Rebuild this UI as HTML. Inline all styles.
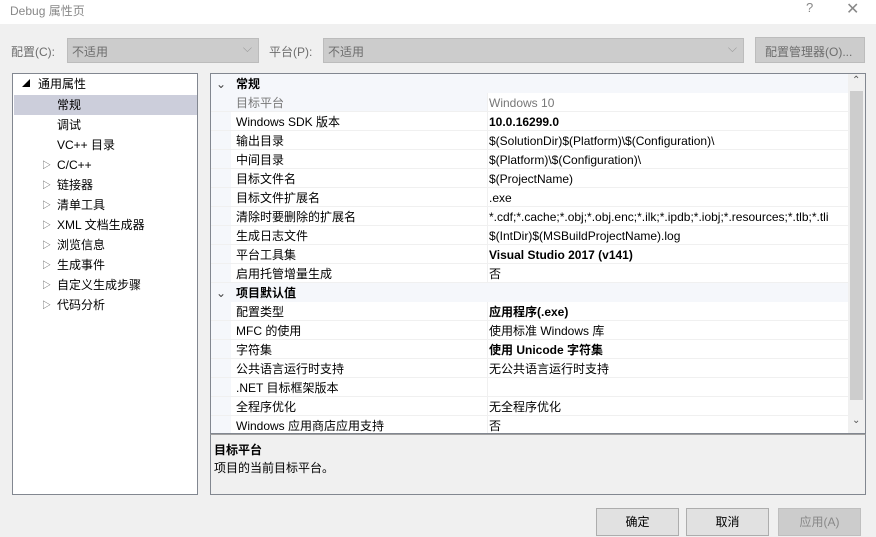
<html><head><style>
*{margin:0;padding:0;box-sizing:border-box}
body{width:876px;height:537px;background:#f0f0f0;font-family:"Liberation Sans","Noto Sans CJK SC",sans-serif;font-size:12px;color:#000;position:relative;overflow:hidden}
.a{position:absolute;white-space:nowrap}
.title{left:0;top:0;width:876px;height:24px;background:#fff}
.combo{height:25px;background:#cccccc;border:1px solid #bcbcbc;color:#6d6d6d;padding:4px 4px;top:38px}
.tree{left:12px;top:73px;width:186px;height:422px;background:#fff;border:1px solid #828790}
.ti{position:absolute;left:0;width:184px;height:20px;line-height:20px}
.grid{left:210px;top:73px;width:656px;height:361px;background:#fff;border:1px solid #828790;overflow:hidden}
.row{position:absolute;left:0;width:637px;height:19px;border-bottom:1px solid #f0f0f0;line-height:20px}
.row .k{position:absolute;left:25px}
.row .v{position:absolute;left:276px;border-left:1px solid #f0f0f0;padding-left:1px;height:19px}
.hdr{position:absolute;left:0;width:637px;height:19px;background:#f5f7fb;line-height:21px;font-weight:bold}
.btn{top:508px;height:28px;width:83px;background:#e1e1e1;border:1px solid #adadad;text-align:center;line-height:26px}
</style></head><body>
<div class="a title"></div>
<div class="a" style="left:10px;top:2px;color:#888;font-size:12px">Debug 属性页</div>
<div class="a" style="left:806px;top:0px;color:#888;font-size:13px">?</div>
<div class="a" style="left:846px;top:-1px;color:#888;font-size:16px">✕</div>
<div class="a" style="left:11px;top:43px;color:#6d6d6d">配置(C):</div>
<div class="a combo" style="left:67px;width:192px">不适用<span style="position:absolute;right:6px;top:2px;color:#999">⌵</span></div>
<div class="a" style="left:269px;top:43px;color:#6d6d6d">平台(P):</div>
<div class="a combo" style="left:323px;width:421px">不适用<span style="position:absolute;right:6px;top:2px;color:#999">⌵</span></div>
<div class="a combo" style="left:755px;width:110px;height:26px;top:37px;background:#cccccc;padding:5px 9px">配置管理器(O)...</div>

<div class="a tree">
<div class="ti" style="top:0"><span style="position:absolute;left:9px;font-size:8px">◢</span><span style="position:absolute;left:25px">通用属性</span></div>
<div class="ti" style="top:21px;left:1px;width:183px;background:#cccedb"><span style="position:absolute;left:43px">常规</span></div>
<div class="ti" style="top:41px"><span style="position:absolute;left:44px">调试</span></div>
<div class="ti" style="top:61px"><span style="position:absolute;left:44px">VC++ 目录</span></div>
<div class="ti" style="top:81px"><span style="position:absolute;left:29px;font-size:9px;color:#555">▷</span><span style="position:absolute;left:44px">C/C++</span></div>
<div class="ti" style="top:101px"><span style="position:absolute;left:29px;font-size:9px;color:#555">▷</span><span style="position:absolute;left:44px">链接器</span></div>
<div class="ti" style="top:121px"><span style="position:absolute;left:29px;font-size:9px;color:#555">▷</span><span style="position:absolute;left:44px">清单工具</span></div>
<div class="ti" style="top:141px"><span style="position:absolute;left:29px;font-size:9px;color:#555">▷</span><span style="position:absolute;left:44px">XML 文档生成器</span></div>
<div class="ti" style="top:161px"><span style="position:absolute;left:29px;font-size:9px;color:#555">▷</span><span style="position:absolute;left:44px">浏览信息</span></div>
<div class="ti" style="top:181px"><span style="position:absolute;left:29px;font-size:9px;color:#555">▷</span><span style="position:absolute;left:44px">生成事件</span></div>
<div class="ti" style="top:201px"><span style="position:absolute;left:29px;font-size:9px;color:#555">▷</span><span style="position:absolute;left:44px">自定义生成步骤</span></div>
<div class="ti" style="top:221px"><span style="position:absolute;left:29px;font-size:9px;color:#555">▷</span><span style="position:absolute;left:44px">代码分析</span></div>
</div>

<div class="a grid">
<div style="position:absolute;left:0;top:0;width:20px;height:360px;background:#f5f7fb"></div>
<div class="hdr" style="top:0"><span style="position:absolute;left:5px;font-weight:normal;color:#444">⌄</span><span style="position:absolute;left:25px">常规</span></div>
<div class="row" style="top:19px;background:linear-gradient(90deg,#f5f7fb 0,#f5f7fb 276px,#fff 276px)"><span class="k" style="color:#777">目标平台</span><span class="v" style="color:#777">Windows 10</span></div>
<div class="row" style="top:38px"><span class="k">Windows SDK 版本</span><span class="v"><b>10.0.16299.0</b></span></div>
<div class="row" style="top:57px"><span class="k">输出目录</span><span class="v">$(SolutionDir)$(Platform)\$(Configuration)\</span></div>
<div class="row" style="top:76px"><span class="k">中间目录</span><span class="v">$(Platform)\$(Configuration)\</span></div>
<div class="row" style="top:95px"><span class="k">目标文件名</span><span class="v">$(ProjectName)</span></div>
<div class="row" style="top:114px"><span class="k">目标文件扩展名</span><span class="v">.exe</span></div>
<div class="row" style="top:133px"><span class="k">清除时要删除的扩展名</span><span class="v">*.cdf;*.cache;*.obj;*.obj.enc;*.ilk;*.ipdb;*.iobj;*.resources;*.tlb;*.tli</span></div>
<div class="row" style="top:152px"><span class="k">生成日志文件</span><span class="v">$(IntDir)$(MSBuildProjectName).log</span></div>
<div class="row" style="top:171px"><span class="k">平台工具集</span><span class="v"><b>Visual Studio 2017 (v141)</b></span></div>
<div class="row" style="top:190px"><span class="k">启用托管增量生成</span><span class="v">否</span></div>
<div class="hdr" style="top:209px"><span style="position:absolute;left:5px;font-weight:normal;color:#444">⌄</span><span style="position:absolute;left:25px">项目默认值</span></div>
<div class="row" style="top:228px"><span class="k">配置类型</span><span class="v"><b>应用程序(.exe)</b></span></div>
<div class="row" style="top:247px"><span class="k">MFC 的使用</span><span class="v">使用标准 Windows 库</span></div>
<div class="row" style="top:266px"><span class="k">字符集</span><span class="v"><b>使用 Unicode 字符集</b></span></div>
<div class="row" style="top:285px"><span class="k">公共语言运行时支持</span><span class="v">无公共语言运行时支持</span></div>
<div class="row" style="top:304px"><span class="k">.NET 目标框架版本</span><span class="v"></span></div>
<div class="row" style="top:323px"><span class="k">全程序优化</span><span class="v">无全程序优化</span></div>
<div class="row" style="top:342px"><span class="k">Windows 应用商店应用支持</span><span class="v">否</span></div>
<div style="position:absolute;left:637px;top:0;width:17px;height:360px;background:#f0f0f0"></div>
<div style="position:absolute;left:639px;top:17px;width:13px;height:309px;background:#cdcdcd"></div>
<div style="position:absolute;left:641px;top:1px;font-size:10px;color:#555">⌃</div>
<div style="position:absolute;left:641px;top:341px;font-size:10px;color:#555">⌄</div>
</div>

<div class="a" style="left:210px;top:434px;width:656px;height:61px;border:1px solid #828790;border-top:1px solid #a0a0a0;background:#f0f0f0"></div>
<div class="a" style="left:214px;top:441px;font-weight:bold">目标平台</div>
<div class="a" style="left:214px;top:459px">项目的当前目标平台。</div>

<div class="a btn" style="left:596px">确定</div>
<div class="a btn" style="left:686px">取消</div>
<div class="a btn" style="left:778px;color:#888;background:#ccc;border-color:#bfbfbf">应用(A)</div>
</body></html>
